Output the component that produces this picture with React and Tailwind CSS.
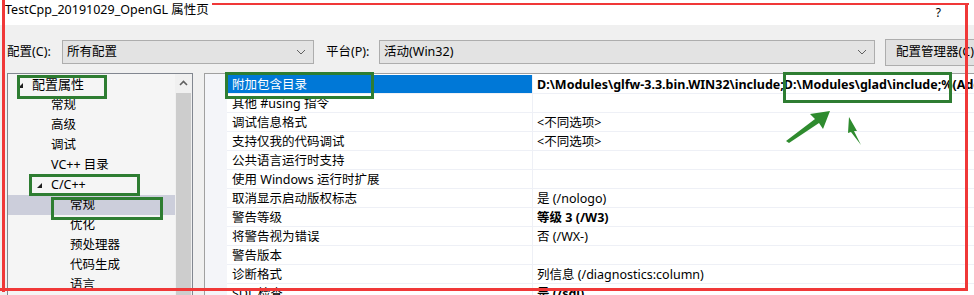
import React from 'react'

const font = { fontFamily: '"Noto Sans", "Noto Sans CJK SC", sans-serif' }

const tree = [
  { label: '配置属性', depth: 0, open: true },
  { label: '常规', depth: 1 },
  { label: '高级', depth: 1 },
  { label: '调试', depth: 1 },
  { label: 'VC++ 目录', depth: 1 },
  { label: 'C/C++', depth: 1, open: true },
  { label: '常规', depth: 2, selected: true },
  { label: '优化', depth: 2 },
  { label: '预处理器', depth: 2 },
  { label: '代码生成', depth: 2 },
  { label: '语言', depth: 2 },
]

const rows = [
  ['附加包含目录', 'D:\\Modules\\glfw-3.3.bin.WIN32\\include;D:\\Modules\\glad\\include;%(AdditionalIncludeDirectories)', true],
  ['其他 #using 指令', ''],
  ['调试信息格式', '<不同选项>'],
  ['支持仅我的代码调试', '<不同选项>'],
  ['公共语言运行时支持', ''],
  ['使用 Windows 运行时扩展', ''],
  ['取消显示启动版权标志', '是 (/nologo)'],
  ['警告等级', '等级 3 (/W3)', true],
  ['将警告视为错误', '否 (/WX-)'],
  ['警告版本', ''],
  ['诊断格式', '列信息 (/diagnostics:column)'],
  ['SDL 检查', '是 (/sdl)', true],
]

function Chevron() {
  return (
    <svg width="10" height="6" viewBox="0 0 10 6" className="shrink-0">
      <path d="M1 1 L5 5 L9 1" fill="none" stroke="#606060" strokeWidth="1" />
    </svg>
  )
}

function Combo({ text, className }) {
  return (
    <div className={`h-[24px] shrink-0 flex items-center justify-between border border-[#adadad] bg-[#e3e3e3] pl-[4px] pr-[7px] ${className}`}>
      <span className="text-[12.5px]">{text}</span>
      <Chevron />
    </div>
  )
}

function Tri() {
  return <span className="inline-block w-0 h-0 border-l-[5px] border-l-transparent border-b-[5px] border-b-[#1e1e1e]" />
}

export default function App() {
  return (
    <div className="relative w-[974px] h-[295px] overflow-hidden bg-[#f0f0f0] text-[12px] text-black" style={font}>
      <div className="h-[25px] bg-white flex items-start pt-[1px] pl-[5px] pr-[33px] justify-between">
        <span className="text-[12.5px]">TestCpp_20191029_OpenGL 属性页</span>
        <span className="text-[12px] mt-[3px]">?</span>
      </div>

      <div className="mt-[13px] h-[28px] flex items-center pl-[7px] whitespace-nowrap">
        <span className="w-[55px] shrink-0 text-[12.5px]">配置(C):</span>
        <Combo text="所有配置" className="w-[252px]" />
        <span className="ml-[12px] w-[53px] shrink-0 text-[12.5px]">平台(P):</span>
        <Combo text="活动(Win32)" className="w-[496px]" />
        <div className="ml-[10px] h-[27px] w-[100px] shrink-0 border border-[#adadad] bg-[#e1e1e1] flex items-center pl-[10px] text-[12.5px]">配置管理器(C)</div>
      </div>

      <div className="mt-[7px] flex h-[230px]">
        <div className="ml-[7px] w-[186px] shrink-0 border border-[#828790] bg-[#f5f5f5] flex">
          <div className="flex-1 min-w-0 pt-[1px]">
            {tree.map((t, i) => (
              <div key={i} className={`h-[20px] flex items-center whitespace-nowrap ${t.selected ? 'bg-[#cccedb]' : ''}`}>
                <div className={`flex items-center ${t.depth === 0 ? 'pl-[10px]' : t.depth === 1 ? 'pl-[29px]' : 'pl-[62px]'}`}>
                  {t.open ? <span className="w-[14px] flex items-center"><Tri /></span> : t.depth === 1 ? <span className="w-[14px]" /> : null}
                  <span className={t.depth === 0 ? 'text-[13px]' : 'text-[12.5px]'}>{t.label}</span>
                </div>
              </div>
            ))}
          </div>
          <div className="w-[17px] shrink-0 bg-[#f0f0f0] flex flex-col">
            <div className="h-[18px] flex items-center justify-center">
              <svg width="9" height="6" viewBox="0 0 9 6"><path d="M1 5 L4.5 1.5 L8 5" fill="none" stroke="#606060" strokeWidth="1.6" /></svg>
            </div>
            <div className="mt-[1px] mx-[1px] flex-1 bg-[#cdcdcd]" />
          </div>
        </div>

        <div className="ml-[11px] flex-1 min-w-0 border-t border-l border-[#a0a0a0] bg-white flex">
          <div className="w-[22px] shrink-0 bg-[#f4f5f9]" />
          <div className="flex-1 min-w-0 pt-[1px]">
            {rows.map(([name, value, bold], i) => (
              <div key={i} className="h-[19px] flex border-b border-[#eef0f6]">
                <div className={`w-[306px] shrink-0 flex items-center pt-[3px] pl-[5px] border-r border-[#eef0f6] ${i === 0 ? 'bg-[#0078d7] text-white' : ''}`}>
                  <span className="whitespace-nowrap text-[12.5px]">{name}</span>
                </div>
                <div className={`flex-1 min-w-0 flex items-center pt-[3px] pl-[4px] whitespace-nowrap overflow-hidden text-[12.5px] ${bold ? 'font-bold' : ''}`}>
                  {value}
                </div>
              </div>
            ))}
          </div>
        </div>
      </div>

      {/* red frame annotation */}
      <div className="absolute left-[2px] top-0 w-[3px] h-[292px] bg-[#f03838]" />
      <div className="absolute left-[212px] top-[3px] w-[757px] h-[2px] bg-[#f03838]" />
      <div className="absolute left-[965px] top-[3px] w-[3px] h-[288px] bg-[#f03838]" />
      <div className="absolute left-0 top-[288px] w-[968px] h-[3px] bg-[#f03838]" />

      {/* green annotation boxes */}
      <div className="absolute left-[17px] top-[75px] w-[90px] h-[24px] border-[3px] border-[#2e7d32]" />
      <div className="absolute left-[225px] top-[72px] w-[149px] h-[27px] border-[3px] border-[#2e7d32]" />
      <div className="absolute left-[29px] top-[174px] w-[111px] h-[22px] border-[3px] border-[#2e7d32]" />
      <div className="absolute left-[51px] top-[197px] w-[112px] h-[23px] border-[3px] border-[#2e7d32]" />
      <div className="absolute left-[783px] top-[72px] w-[169px] h-[31px] border-[3px] border-[#2e7d32]" />

      <svg className="absolute left-0 top-0" width="974" height="295" viewBox="0 0 974 295">
        <polygon points="786,141 815,119 810,114 830,111 823,129 819,123 789,143" fill="#2e8b2e" />
        <polygon points="849,117 857,131 854,131 861,145 851,132 848,133" fill="#2e8b2e" />
      </svg>
    </div>
  )
}
